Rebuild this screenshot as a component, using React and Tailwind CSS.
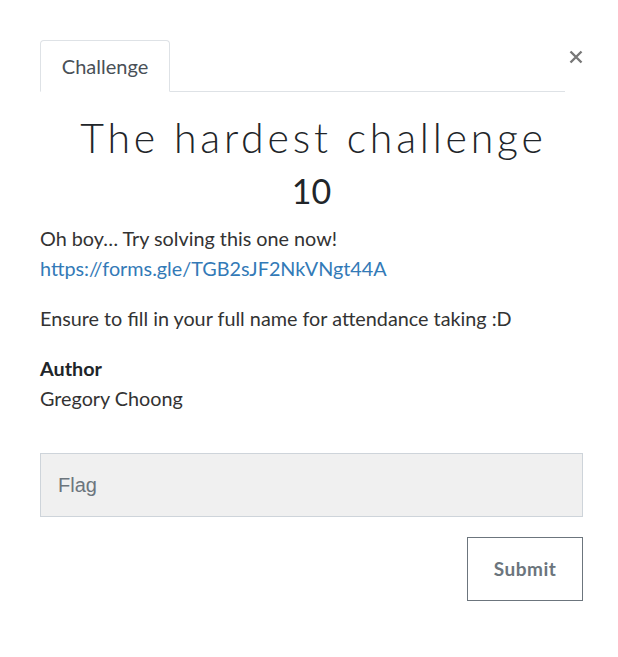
import React from 'react';

const ChallengeModal = () => {
  return (
    <div className="min-h-[657px] w-full bg-white font-['Lato',sans-serif] text-[#212529]">
      <div className="pl-10 pr-[35px] pt-10">
        {/* Tabs header */}
        <div className="flex items-start">
          <div className="flex flex-1 border-b border-[#dee2e6]">
            <div className="-mb-px flex h-[52px] w-[130px] items-center justify-center rounded-t border border-[#dee2e6] border-b-white bg-white text-[20px] text-[#495057]">
              Challenge
            </div>
          </div>
          <div className="flex w-[18px] justify-end pt-[10px]">
            <svg width="14" height="14" viewBox="0 0 14 14" className="text-[#777]">
              <path d="M1.5 1.5 L12.5 12.5 M12.5 1.5 L1.5 12.5" stroke="currentColor" strokeWidth="2.4" />
            </svg>
          </div>
        </div>

        {/* Title */}
        <div className="text-center">
          <h2 className="mt-[22px] pl-[4px] text-[41px] font-light leading-[48px] tracking-[3.8px] text-[#212529]">
            The hardest challenge
          </h2>
          <h3 className="mt-[9px] text-[34px] font-normal leading-[40px]">10</h3>
        </div>

        {/* Description */}
        <div className="mt-[12px] text-[19.8px] leading-[30px] text-[#333]">
          <p>
            Oh boy… Try solving this one now!
            <br />
            <a href="#" className="text-[#337ab7]">
              https://forms.gle/TGB2sJF2NkVNgt44A
            </a>
          </p>
          <p className="mt-5">Ensure to fill in your full name for attendance taking :D</p>
          <p className="mt-5 font-bold text-[#212529]">Author</p>
          <p>Gregory Choong</p>
        </div>

        {/* Flag form */}
        <div className="mt-[40px]">
          <input
            placeholder="Flag"
            className="block h-16 w-full border border-[#ced4da] bg-[#f0f0f0] px-[17px] font-['Liberation_Sans',sans-serif] text-[20px] placeholder:text-[#6c757d] focus:outline-none"
          />
        </div>
        <div className="mt-5 flex justify-end">
          <button className="h-16 w-[116px] border border-[#6c757d] bg-white text-[19px] font-bold tracking-[0.5px] text-[#6c757d]">
            Submit
          </button>
        </div>
      </div>
    </div>
  );
};

export default function App() {
  return <ChallengeModal />;
}
